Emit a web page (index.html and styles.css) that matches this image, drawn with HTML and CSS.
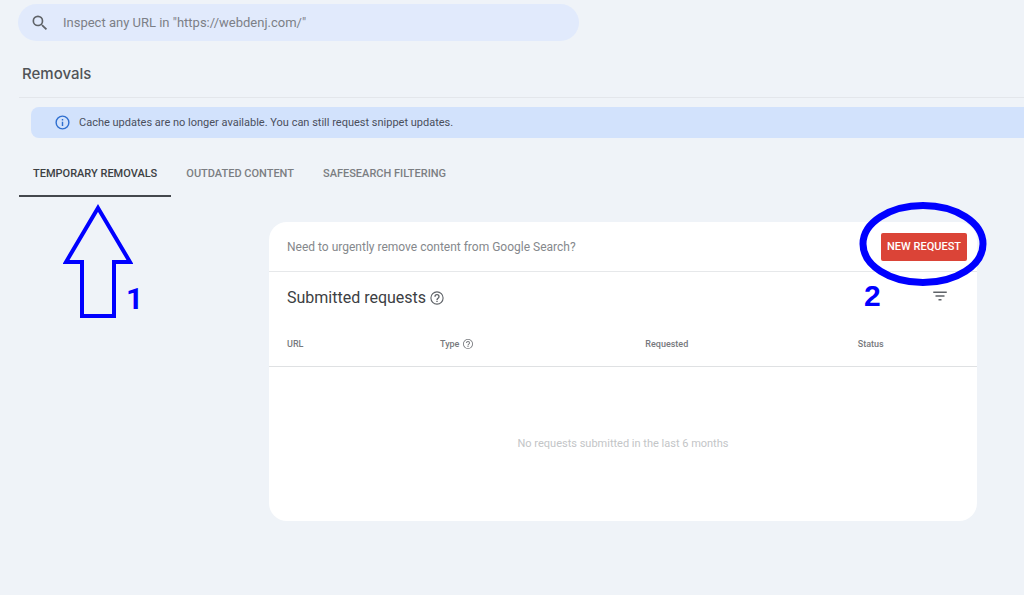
FILE: index.html
```html
<!DOCTYPE html>
<html lang="en">
<head>
<meta charset="utf-8">
<meta name="viewport" content="width=device-width, initial-scale=1">
<title>Removals</title>
<link rel="stylesheet" href="styles.css">
</head>
<body>
<header class="topbar">
  <form class="search" role="search">
    <label class="search-label" for="inspect" aria-label="Inspect URL">
      <svg class="icon-search" viewBox="0 0 24 24" aria-hidden="true"><path d="M15.5 14h-.79l-.28-.27A6.47 6.47 0 0 0 16 9.5 6.5 6.5 0 1 0 9.5 16c1.61 0 3.09-.59 4.23-1.57l.27.28v.79l5 4.99L20.49 19l-4.99-5zm-6 0a4.5 4.5 0 1 1 0-9 4.5 4.5 0 0 1 0 9z"/></svg>
    </label>
    <input class="search-input" id="inspect" type="text" placeholder='Inspect any URL in "https://webdenj.com/"'>
  </form>
</header>
<main class="page">
  <h1 class="page-title">Removals</h1>
  <div class="notice" role="status">
    <svg class="icon-info" viewBox="0 0 24 24" aria-hidden="true"><path d="M11 7h2v2h-2zm0 4h2v6h-2zm1-9a10 10 0 1 0 0 20 10 10 0 0 0 0-20zm0 18a8 8 0 1 1 0-16 8 8 0 0 1 0 16z"/></svg>
    <span>Cache updates are no longer available. You can still request snippet updates.</span>
  </div>
  <nav class="tabs">
    <div class="tab-anchor">
      <a class="tab tab-active" href="#temporary" aria-current="page">TEMPORARY REMOVALS</a>
      <svg class="arrow" viewBox="0 0 70 114" aria-hidden="true"><path d="M35 4 67 58H51V112H19V58H3Z" fill="none" stroke="#00f" stroke-width="4"/></svg>
      <span class="step-number step-one">1</span>
    </div>
    <a class="tab" href="#outdated">OUTDATED CONTENT</a>
    <a class="tab" href="#safesearch">SAFESEARCH FILTERING</a>
  </nav>
  <section class="card">
    <div class="card-prompt">
      <p class="prompt-text">Need to urgently remove content from Google Search?</p>
      <div class="request-anchor">
        <button class="request-button" type="button">NEW REQUEST</button>
        <svg class="ring" viewBox="0 0 128 84" aria-hidden="true"><ellipse cx="64" cy="42" rx="60" ry="38.500" fill="none" stroke="#00f" stroke-width="7"/></svg>
        <span class="step-number step-two">2</span>
      </div>
    </div>
    <div class="card-heading">
      <h2 class="card-title">Submitted requests</h2>
      <button class="icon-button" type="button" aria-label="Help">
        <svg class="icon-help" viewBox="0 0 24 24" aria-hidden="true"><path d="M11 18h2v-2h-2v2zm1-16a10 10 0 1 0 0 20 10 10 0 0 0 0-20zm0 18.300a8.300 8.300 0 1 1 0-16.600 8.300 8.300 0 0 1 0 16.600zM12 6a4 4 0 0 0-4 4h2a2 2 0 1 1 4 0c0 2-3 1.750-3 5h2c0-2.250 3-2.500 3-5a4 4 0 0 0-4-4z"/></svg>
      </button>
      <button class="icon-button filter-button" type="button" aria-label="Filter">
        <svg class="icon-filter" viewBox="0 0 24 24" aria-hidden="true"><path d="M10 18h4v-2h-4v2zM3 6v2h18V6H3zm3 7h12v-2H6v2z"/></svg>
      </button>
    </div>
    <table class="requests">
      <colgroup><col class="col-url"><col class="col-type"><col class="col-requested"><col class="col-status"></colgroup>
      <thead>
        <tr>
          <th scope="col">URL</th>
          <th scope="col"><span class="th-label">Type <svg class="icon-help-small" viewBox="0 0 24 24" aria-hidden="true"><path d="M11 18h2v-2h-2v2zm1-16a10 10 0 1 0 0 20 10 10 0 0 0 0-20zm0 18.300a8.300 8.300 0 1 1 0-16.600 8.300 8.300 0 0 1 0 16.600zM12 6a4 4 0 0 0-4 4h2a2 2 0 1 1 4 0c0 2-3 1.750-3 5h2c0-2.250 3-2.500 3-5a4 4 0 0 0-4-4z"/></svg></span></th>
          <th scope="col">Requested</th>
          <th scope="col">Status</th>
        </tr>
      </thead>
      <tbody>
        <tr><td class="empty" colspan="4">No requests submitted in the last 6 months</td></tr>
      </tbody>
    </table>
  </section>
</main>
</body>
</html>
```
FILE: styles.css
```css
* { box-sizing: border-box; }
body {
  margin: 0;
  background: #eff3f8;
  color: #3c4043;
  font-family: Roboto, "Liberation Sans", sans-serif;
  font-size: 11px;
  line-height: 16px;
}
svg { display: block; fill: currentColor; }
h1, h2, p { margin: 0; font-weight: 400; }
button { border: 0; padding: 0; font: inherit; cursor: pointer; }

.topbar { padding: 4px 18px 0; }
.search {
  display: flex;
  align-items: center;
  gap: 13px;
  max-width: 561px;
  height: 37px;
  padding: 0 12px;
  border-radius: 19px;
  background: #e1eafc;
}
.search-label { color: #5f6368; }
.icon-search { width: 20px; height: 20px; }
.search-input {
  flex: 1;
  min-width: 0;
  border: 0;
  padding: 0;
  background: transparent;
  color: #3c4043;
  font: inherit;
  font-size: 13px;
  outline: 0;
}
.search-input::placeholder { color: #7c8087; opacity: 1; }

.page { padding-left: 19px; }
.page-title {
  padding: 23px 3px 13px;
  border-bottom: 1px solid #e3e6eb;
  font-family: Inter, Roboto, sans-serif;
  font-size: 15px;
  font-weight: 500;
  line-height: 20px;
  color: #505357;
}
.notice {
  display: flex;
  align-items: center;
  gap: 8px;
  min-height: 31px;
  margin: 9px 0 0 12px;
  padding: 0 23px;
  border-radius: 8px 0 0 8px;
  background: #d2e2fc;
  color: #4a4f5c;
}
.icon-info { width: 17px; height: 17px; color: #2f6fd0; }

.tabs { display: flex; gap: 1px; margin-top: 12px; }
.tab-anchor { position: relative; }
.tab {
  display: block;
  padding: 16px 14px 13px;
  border-bottom: 2px solid transparent;
  color: #7b7e82;
  font-weight: 500;
  text-decoration: none;
  white-space: nowrap;
}
.tab-active { border-color: #44474d; color: #3c4043; }

.arrow { position: absolute; top: 54px; left: 44px; width: 70px; height: 114px; }
.step-number {
  position: absolute;
  color: #00f;
  font-family: "Liberation Sans", Arial, sans-serif;
  font-size: 30px;
  font-weight: 700;
  line-height: 36px;
}
.step-one { top: 131px; left: 107px; font-family: Roboto, Arial, sans-serif; }
.step-two { top: 45px; left: -17px; }

.card {
  margin: 25px 47px 0 250px;
  border-radius: 18px;
  background: #fff;
}
.card-prompt {
  display: flex;
  align-items: center;
  justify-content: space-between;
  padding: 11px 10px 10px 18px;
  border-bottom: 1px solid #e6e8ea;
}
.prompt-text { color: #85888c; font-size: 12px; }
.request-anchor { position: relative; }
.request-button {
  display: block;
  padding: 6px;
  border-radius: 2px;
  background: #db4437;
  color: #fff;
  font-weight: 500;
}
.ring { position: absolute; top: -31px; left: -22px; width: 128px; height: 84px; pointer-events: none; }

.card-heading { display: flex; align-items: flex-start; gap: 3px; padding: 15px 28px 10px 18px; }
.card-title { padding-top: 1px; font-size: 16px; line-height: 20px; }
.icon-button { background: transparent; color: #5f6368; }
.icon-help { width: 16px; height: 16px; margin-top: 3px; }
.filter-button { margin-left: auto; }
.icon-filter { width: 18px; height: 18px; }

.requests { width: 100%; border-collapse: collapse; table-layout: fixed; }
.col-url { width: 153px; }
.col-type { width: 29%; }
.col-requested { width: 30%; }
.requests th {
  height: 48px;
  padding: 4px 18px 0;
  border-bottom: 1px solid #dfe1e3;
  color: #77797d;
  font-size: 9px;
  font-weight: 500;
  text-align: left;
}
.th-label { display: flex; align-items: center; gap: 3px; }
.icon-help-small { width: 12px; height: 12px; }
.empty { height: 155px; padding: 0; color: #c3c5c7; text-align: center; }
```
